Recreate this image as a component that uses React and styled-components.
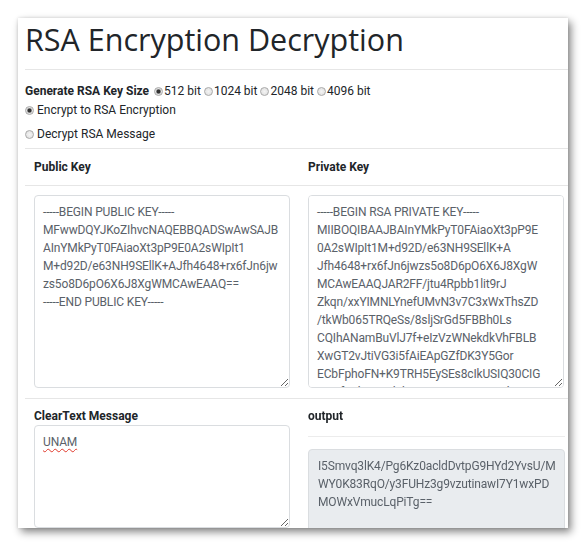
import React from "react";
import styled, { createGlobalStyle } from "styled-components";

const Global = createGlobalStyle`
  html, body { margin: 0; padding: 0; background: #ffffff; }
  body { font-family: Roboto, "Open Sans", sans-serif; color: #212529; }
  * { box-sizing: border-box; }
`;

const Page = styled.div`
  padding: 18px 0 0 18px;
  width: 588px;
  height: 548px;
`;

const Card = styled.div`
  width: 550px;
  height: 510px;
  overflow: hidden;
  background: #fff;
  padding: 0 0 0 7px;
  box-shadow: 3px 4px 8px rgba(0, 0, 0, 0.48), 0 0 3px rgba(0, 0, 0, 0.12);
`;

const Title = styled.h1`
  margin: 0;
  padding: 3px 0 0 0;
  font-family: "Open Sans", "Noto Sans", sans-serif;
  font-size: 30.5px;
  line-height: 37px;
  font-weight: 400;
  color: #212529;
`;

const Rule = styled.hr`
  border: 0;
  border-top: 1px solid #e6e6e6;
  margin: ${(p) => p.$m || "11px 0 0 0"};
`;

const Options = styled.div`
  display: flex;
  flex-direction: column;
  padding: 12px 0 4px 0;
  font-size: 12px;
  line-height: 19px;
`;

const OptionLine = styled.label`
  display: flex;
  align-items: center;
  margin-top: ${(p) => (p.$spaced ? "5px" : "0")};
`;

const KeySize = styled.strong`
  font-weight: 700;
  margin-right: 5px;
`;

const SizeChoice = styled.span`
  display: inline-flex;
  align-items: center;
  margin-right: 3px;
`;

const Radio = styled.span`
  display: inline-block;
  width: 9px;
  height: 9px;
  border-radius: 50%;
  border: 1px solid #a9a9a9;
  background: ${(p) =>
    p.$checked
      ? "radial-gradient(circle, #333 0 1.6px, #9a9a9a 2.2px, #e4e4e4 3px)"
      : "radial-gradient(circle, #f4f4f4 0, #dcdcdc 100%)"};
  margin: ${(p) => p.$m || "0 1px 0 0"};
  flex: none;
`;

const Table = styled.div`
  display: grid;
  grid-template-columns: 274px 269px;
`;

const HeadCell = styled.div`
  font-weight: 700;
  font-size: 12px;
  line-height: 17px;
  padding: 10px 9px 9px 9px;
  border-bottom: 1px solid #e6e6e6;
`;

const Cell = styled.div`
  padding: ${(p) => p.$pad || "9px 9px 10px 9px"};
  border-bottom: ${(p) => (p.$last ? "none" : "1px solid #e6e6e6")};
  display: flex;
  flex-direction: column;
`;

const Label = styled.div`
  font-weight: 700;
  font-size: 12px;
  line-height: 17px;
`;

const Area = styled.textarea`
  display: block;
  width: 256px;
  height: ${(p) => p.$h || "193px"};
  margin: 0;
  padding: 7px 8px;
  font-family: Roboto, "Open Sans", sans-serif;
  font-size: 12px;
  line-height: 18px;
  letter-spacing: -0.15px;
  color: #5a6169;
  border: 1px solid #dadde0;
  border-radius: 4px;
  background: #fff;
  resize: both;
  outline: none;
  overflow-y: auto;
  word-break: break-all;
  text-decoration: ${(p) => (p.$spell ? "underline wavy #e0392b" : "none")};
  text-decoration-thickness: 1px;
  text-underline-offset: 2px;

  &::-webkit-scrollbar {
    width: 12px;
  }
  &::-webkit-scrollbar-track {
    background: #f1f1f1;
  }
  &::-webkit-scrollbar-thumb {
    background: #c1c1c1;
    border-left: 1px solid #f1f1f1;
    border-right: 1px solid #f1f1f1;
  }
  &::-webkit-scrollbar-button:single-button {
    display: block;
    height: 12px;
    background-color: #f1f1f1;
  }
  &::-webkit-scrollbar-button:single-button:vertical:decrement {
    background-image: conic-gradient(from 140deg at 50% 0, #a3a3a3 0 80deg, transparent 80deg);
    background-size: 6px 4px;
    background-position: center 4px;
    background-repeat: no-repeat;
  }
  &::-webkit-scrollbar-button:single-button:vertical:increment {
    background-image: conic-gradient(from -40deg at 50% 100%, #505050 0 80deg, transparent 80deg);
    background-size: 6px 4px;
    background-position: center 4px;
    background-repeat: no-repeat;
  }
  &::-webkit-scrollbar-corner {
    background: #f1f1f1;
  }
`;

const OutRule = styled.hr`
  border: 0;
  border-top: 1px solid #ececec;
  margin: 11px 0 12px 0;
  width: 257px;
`;

const Output = styled.div`
  width: 257px;
  height: 120px;
  background: #e9ecef;
  border: 1px solid #dadde0;
  border-radius: 4px;
  padding: 7px 8px 7px 9px;
  font-size: 12px;
  line-height: 18px;
  letter-spacing: -0.15px;
  color: #5a6169;
  white-space: pre-wrap;
  word-break: break-all;
`;

const publicKey = `-----BEGIN PUBLIC KEY-----
MFwwDQYJKoZIhvcNAQEBBQADSwAwSAJB
AInYMkPyT0FAiaoXt3pP9E0A2sWIpIt1
M+d92D/e63NH9SEllK+AJfh4648+rx6fJn6jw
zs5o8D6pO6X6J8XgWMCAwEAAQ==
-----END PUBLIC KEY-----`;

const privateKey = `-----BEGIN RSA PRIVATE KEY-----
MIIBOQIBAAJBAInYMkPyT0FAiaoXt3pP9E
0A2sWIpIt1M+d92D/e63NH9SEllK+A
Jfh4648+rx6fJn6jwzs5o8D6pO6X6J8XgW
MCAwEAAQJAR2FF/jtu4Rpbb1lit9rJ
Zkqn/xxYIMNLYnefUMvN3v7C3xWxThsZD
/tkWb065TRQeSs/8sljSrGd5FBBh0Ls
CQIhANamBuVlJ7f+eIzVzWNekdkVhFBLB
XwGT2vJtiVG3i5fAiEApGZfDK3Y5Gor
ECbFphoFN+K9TRH5EySEs8cIkUSIQ30CIG
Ajs3f0YkPZ9Ql8hVt2c7Wq0mXa4eRkN
Tyu1bH6fFJ2dMgP7oQx5sWvI3nLcZr
AiEAtD9kQm3PzR7wXc1vY0sG5hJ2fN
uO8aLbVt4eW6iQy3Zk1pCxMnDs7AiEA
qR2lUvXh8Yc0FzN3sWkP6mGjT5oB1d
E7tHwL9yIaK4rVc2QxZnS8uMfO0gJ
-----END RSA PRIVATE KEY-----`;

const outputText = `I5Smvq3lK4/Pg6Kz0acldDvtpG9HYd2YvsU/M
WY0K83RqO/y3FUHz3g9vzutinawI7Y1wxPD
MOWxVmucLqPiTg==`;

export default function App() {
  return (
    <>
      <Global />
      <Page>
        <Card>
          <Title>RSA Encryption Decryption</Title>
          <Rule />
          <Options>
            <OptionLine>
              <KeySize>Generate RSA Key Size</KeySize>
              <SizeChoice><Radio $checked />512 bit</SizeChoice>
              <SizeChoice><Radio />1024 bit</SizeChoice>
              <SizeChoice><Radio />2048 bit</SizeChoice>
              <SizeChoice><Radio />4096 bit</SizeChoice>
            </OptionLine>
            <OptionLine>
              <Radio $checked $m="0 3px 0 0" />Encrypt to RSA Encryption
            </OptionLine>
            <OptionLine $spaced>
              <Radio $m="0 3px 0 0" />Decrypt RSA Message
            </OptionLine>
          </Options>
          <Rule $m="0" />
          <Table>
            <HeadCell>Public Key</HeadCell>
            <HeadCell>Private Key</HeadCell>
            <Cell>
              <Area defaultValue={publicKey} spellCheck={false} />
            </Cell>
            <Cell>
              <Area defaultValue={privateKey} spellCheck={false} />
            </Cell>
            <Cell $last $pad="9px 9px 2px 9px">
              <Label>ClearText Message</Label>
              <Area $h="103px" $spell defaultValue="UNAM" spellCheck={false} />
            </Cell>
            <Cell $last $pad="9px 9px 0 9px">
              <Label>output</Label>
              <OutRule />
              <Output>{outputText}</Output>
            </Cell>
          </Table>
        </Card>
      </Page>
    </>
  );
}
